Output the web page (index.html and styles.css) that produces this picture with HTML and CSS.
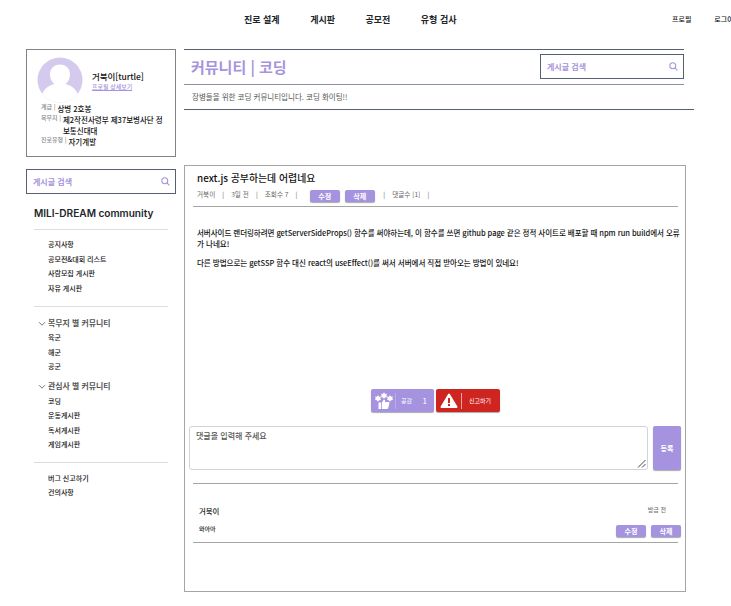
FILE: index.html
```html
<!DOCTYPE html>
<html lang="ko">
<head>
<meta charset="utf-8">
<title>MILI-DREAM community</title>
<link rel="stylesheet" href="styles.css">
</head>
<body>
<header class="topbar">
  <nav class="main-nav"><a>진로 설계</a><a>게시판</a><a>공모전</a><a>유형 검사</a></nav>
  <div class="user-nav"><a>프로필</a><a>로그아웃</a></div>
</header>
<div class="layout">
  <aside class="sidebar">
    <section class="profile">
      <div class="profile-top">
        <svg class="avatar" viewBox="0 0 46 46"><defs><clipPath id="round"><circle cx="23" cy="23" r="22.5"/></clipPath></defs><g clip-path="url(#round)"><path fill="#d4caee" d="M0 0h46v46H0z"/><path fill="#fff" d="M23 7.500c-6 0-10 4.200-10 10 0 4 1.700 7.500 4.500 9.500C10.500 28.500 6 33 4 40v6h38v-6c-2-7-6.500-11.500-13.500-13 2.800-2 4.500-5.500 4.500-9.500 0-5.800-4-10-10-10z"/></g></svg>
        <div class="identity"><strong>거북이[turtle]</strong><a>프로필 상세보기</a></div>
      </div>
      <dl class="facts">
        <div><dt>계급 |</dt><dd>상병 2호봉</dd></div>
        <div><dt>복무지 |</dt><dd>제2작전사령부 제37보병사단 정<br>보통신대대</dd></div>
        <div><dt>진로유형 |</dt><dd>자기계발</dd></div>
      </dl>
    </section>
    <div class="search side-search"><span>게시글 검색</span><svg viewBox="0 0 10 10"><circle cx="4.200" cy="4.200" r="3.300"/><path d="M6.600 6.600L9.300 9.300"/></svg></div>
    <h2 class="brand">MILI-DREAM community</h2>
    <ul class="menu first"><li>공지사항</li><li>공모전&amp;대회 리스트</li><li>사람모집 게시판</li><li>자유 게시판</li></ul>
    <div class="groups">
      <h3><svg viewBox="0 0 8 6"><path d="M1 1.200l3 3 3-3"/></svg>복무지 별 커뮤니티</h3>
      <ul class="menu"><li>육군</li><li>해군</li><li>공군</li></ul>
      <h3 class="second"><svg viewBox="0 0 8 6"><path d="M1 1.200l3 3 3-3"/></svg>관심사 별 커뮤니티</h3>
      <ul class="menu"><li>코딩</li><li>운동게시판</li><li>독서게시판</li><li>게임게시판</li></ul>
    </div>
    <ul class="menu last"><li>버그 신고하기</li><li>건의사항</li></ul>
  </aside>
  <main class="content">
    <div class="board-head">
      <h1>커뮤니티 | 코딩</h1>
      <div class="search"><span>게시글 검색</span><svg viewBox="0 0 10 10"><circle cx="4.200" cy="4.200" r="3.300"/><path d="M6.600 6.600L9.300 9.300"/></svg></div>
    </div>
    <p class="board-desc">장병들을 위한 코딩 커뮤니티입니다. 코딩 화이팅!!</p>
    <article class="post">
      <h2 class="post-title">next.js 공부하는데 어렵네요</h2>
      <div class="meta"><span class="author">거북이</span><i>|</i><span class="date">3일 전</span><i>|</i><span class="views">조회수 7</span><i>|</i><button class="edit">수정</button><button>삭제</button><i class="after">|</i><span class="count">댓글수 [1]</span><i>|</i></div>
      <div class="post-body">
        <p class="p1">서버사이드 랜더링하려면 getServerSideProps() 함수를 써야하는데, 이 함수를 쓰면 github page 같은 정적 사이트로 배포할 때 npm run build에서 오류</p>
        <p>가 나네요!</p>
        <p class="p2">다른 방법으로는 getSSP 함수 대신 react의 useEffect()를 써서 서버에서 직접 받아오는 방법이 있네요!</p>
      </div>
      <div class="reactions">
        <div class="react like"><svg viewBox="0 0 18 18"><g fill="#fff"><path d="M3 3l1 1.700 1.900-.3-.6 1.900L6 8l-1.900.2L3 9.800 1.900 8.200 0 8l.7-1.700L.1 4.400l1.900.3z"/><path d="M9 .3l1.100 1.600 1.900-.2-.6 1.900.6 1.800-1.900-.1L9 7 7.900 5.300 6 5.400l.6-1.800L6 1.700l1.900.2z"/><path d="M15 3l1 1.700 1.900-.3-.6 1.900.7 1.700-1.900.2L15 9.800l-1.100-1.600L12 8l.7-1.700-.6-1.900 1.900.3z"/><path d="M3.500 10.500h2.700V17H3.500zM7 10.500l1.700-3c1.300 0 1.600.8 1.300 2.500h3.600c.8 0 1.100.8.800 1.600l-1.200 4.500c-.2.600-.6.900-1.200.9H7z"/></g></svg><span>공감</span><b>1</b></div>
        <div class="react report"><svg viewBox="0 0 18 16"><path fill="#fff" stroke="#fff" stroke-width="2" stroke-linejoin="round" d="M9 1.500L16.500 14h-15z"/><path stroke="#ce2520" stroke-width="2" d="M9 5v5M9 11v2"/></svg><span>신고하기</span></div>
      </div>
      <div class="comment-form"><div class="input">댓글을 입력해 주세요<svg viewBox="0 0 9 9"><path d="M1 8.500L8.500 1M5 8.500L8.500 5"/></svg></div><button>등록</button></div>
      <section class="comment">
        <div class="comment-top"><span>거북이</span><time>방금 전</time></div>
        <div class="comment-bottom"><p>와아아</p><div class="actions"><button>수정</button><button>삭제</button></div></div>
      </section>
    </article>
  </main>
</div>
</body>
</html>
```
FILE: styles.css
```css
* { box-sizing: border-box; margin: 0; padding: 0; }
body { width: 731px; height: 606px; overflow: hidden; background: #fff; color: #212529; font: 500 7px/12px "Noto Sans CJK KR", sans-serif; white-space: nowrap; }
ul { list-style: none; }
.topbar { display: flex; height: 49px; padding-top: 13px; }
.main-nav { display: flex; flex: none; gap: 30.500px; width: 428px; margin-left: 244px; font-size: 9px; font-weight: 700; line-height: 13px; }
.user-nav { display: flex; flex: none; gap: 23px; line-height: 13px; color: #111; }
.layout { display: flex; gap: 8px; padding-left: 26px; }
.sidebar { width: 150px; flex: none; }
.profile { height: 108px; border: 1px solid #828285; padding: 7px 10px 0; }
.profile-top { display: flex; gap: 9px; height: 46px; }
.avatar { width: 46px; height: 46px; }
.identity { padding-top: 13px; }
.identity strong { display: block; font-size: 8.500px; font-weight: 500; line-height: 13px; color: #111; letter-spacing: -.05px; }
.identity a { display: block; width: 40px; font-size: 6px; line-height: 7px; color: #a693dd; border-bottom: 1px solid #a693dd; }
.facts { padding: 0 0 0 4px; color: #111; font-size: 7.500px; line-height: 11px; }
.facts div { display: flex; gap: 2px; }
.facts dt { font-size: 6px; color: #888; line-height: 8px; }
.search { display: flex; align-items: center; justify-content: space-between; width: 144px; height: 25px; border: 1px solid #566070; padding: 0 5px 0 6px; color: #a693dd; font-size: 8px; font-weight: 700; }
.search svg { width: 9px; height: 9px; fill: none; stroke: #a693dd; stroke-width: 1.200; }
.side-search { width: 150px; margin-top: 12px; }
.brand { margin: 12px 0 0 8px; font: 600 10.100px/15px Inter, sans-serif; }
.menu { padding-left: 22px; line-height: 14.500px; color: #111; }
.first { margin: 8px 8px 0; border-top: 1px solid #dcdde2; padding: 7px 0 10px 14px; height: 77px; }
.groups { margin: 0 8px; height: 156px; border-top: 1px solid #dcdde2; padding-top: 8px; }
.groups h3 { display: flex; align-items: center; height: 15px; padding-left: 4px; gap: 2px; font-size: 7.900px; font-weight: 700; color: #555; }
.groups h3.second { margin-top: 5px; }
.groups h3 svg { width: 8px; height: 6px; fill: none; stroke: #777; position: relative; top: 1px; }
.groups .menu { padding-left: 14px; }
.last { margin: 0 8px; border-top: 1px solid #dcdde2; padding: 8px 0 0 14px; line-height: 14px; }
.content { width: 510px; flex: none; }
.board-head { display: flex; justify-content: space-between; width: 500px; height: 36px; border-top: 1px solid #566070; border-bottom: 1px solid #8d90a4; padding: 4px 0 0 7px; }
.board-head h1 { font-size: 15px; line-height: 26px; font-weight: 700; color: #a693dd; }
.board-desc { height: 25px; border-bottom: 1px solid #566070; padding-left: 8px; line-height: 24px; font-size: 7.500px; font-weight: 400; color: #555; }
.post { width: 502px; height: 427px; margin-top: 55px; border: 1px solid #a5a5a5; }
.post-title { padding: 5px 0 0 12px; font-size: 9.900px; line-height: 15px; font-weight: 500; color: #111; }
.meta { display: flex; margin: 2px 7px 0 8px; height: 19px; padding-left: 4px; border-bottom: 1px solid #a5a5a5; font-size: 6.600px; font-weight: 400; line-height: 12px; color: #666; }
.meta i { font-style: normal; margin: 0 7.100px; }
button { width: 30px; height: 12px; border: 0; border-radius: 2px; background: #a693e0; color: #fff; font: 700 7px/12px "Noto Sans CJK KR", sans-serif; box-shadow: 0 1px 1px #aaa; }
.meta button { flex: none; margin: 2px 5px 0 0; }
.meta .edit { margin-left: 5.300px; }
.meta .after { margin-left: 3.500px; }
.post-body { height: 182px; padding: 20px 0 0 12px; font-size: 7.500px; line-height: 11px; color: #111; }
.post-body .p1 { letter-spacing: -.05px; }
.post-body .p2 { margin-top: 8px; letter-spacing: -.03px; }
.reactions { display: flex; gap: 2px; padding-left: 186px; height: 37px; }
.react { display: flex; align-items: center; width: 63px; height: 23px; border-radius: 2px; background: #a693e0; color: #fff; font-size: 6px; padding: 0 7px 0 4px; box-shadow: 0 1px 1px #aaa; }
.react svg { width: 18px; height: 18px; margin-right: 2px; }
.react span { border-left: 1px solid #b9abe6; line-height: 16px; padding-left: 5px; font-weight: 400; }
.react b { margin-left: auto; font-size: 8px; font-weight: 400; }
.report { width: 64px; background: #ce2520; }
.report svg { margin-right: 3px; }
.report span { border-color: #eda5a3; padding-left: 7px; }
.comment-form { display: flex; gap: 5px; padding-left: 4px; height: 57px; }
.input { position: relative; width: 459px; height: 44px; border: 1px solid #ced4da; border-radius: 3px; padding: 3px 6px; font-size: 8px; color: #555; }
.input svg { position: absolute; right: 1px; bottom: 1px; width: 9px; height: 9px; fill: none; stroke: #333; stroke-width: .9; }
.comment-form button { width: 28px; height: 44px; }
.comment { margin: 0 7px 0 8px; height: 60px; border: solid #a5a5a5; border-width: 1px 0; }
.comment-top { display: flex; justify-content: space-between; padding: 21px 12px 0 6px; color: #222; font-size: 7.400px; }
.comment-top time { font-size: 6px; line-height: 9px; color: #777; }
.comment-bottom { display: flex; justify-content: space-between; padding-left: 6px; margin-right: -3px; padding-top: 6px; font-size: 6px; color: #111; }
.actions { display: flex; gap: 5px; padding-top: 2px; }
```
